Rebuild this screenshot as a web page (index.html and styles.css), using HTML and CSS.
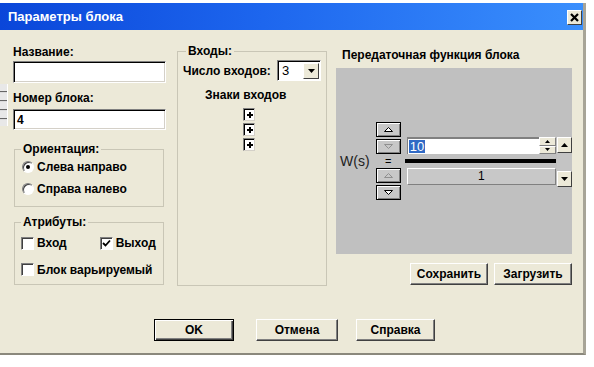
FILE: index.html
```html
<!DOCTYPE html>
<html lang="ru">
<head>
    <meta charset="UTF-8">
    <title>Параметры блока</title>
    <link rel="stylesheet" href="styles.css">
</head>
<body>
    <div class="edge-stub"></div>
    <div class="window">
        <div class="titlebar">
            <span class="title">Параметры блока</span>
            <span class="close">
                <svg width="9" height="9" viewBox="0 0 9 9"><path d="M1 1L8 8M8 1L1 8" stroke="#000" stroke-width="2.2"/></svg>
            </span>
        </div>

        <div class="client">
            <div class="top">
                <!-- left column -->
                <div class="col-left">
                    <div class="label first">Название:</div>
                    <div class="field name"></div>
                    <div class="label second">Номер блока:</div>
                    <div class="field number">4</div>

                    <fieldset class="group orient">
                        <legend>Ориентация:</legend>
                        <div class="opt"><span class="radio on"></span>Слева направо</div>
                        <div class="opt"><span class="radio"></span>Справа налево</div>
                    </fieldset>

                    <fieldset class="group attrs">
                        <legend>Атрибуты:</legend>
                        <div class="opt row1">
                            <span class="chk"></span>Вход
                            <span class="chk checked out">
                                <svg width="9" height="9" viewBox="0 0 9 9"><path d="M1 4L3.5 6.5L8 1.5" fill="none" stroke="#000" stroke-width="1.8"/></svg>
                            </span>Выход
                        </div>
                        <div class="opt row2"><span class="chk"></span>Блок варьируемый</div>
                    </fieldset>
                </div>

                <!-- middle column -->
                <fieldset class="group inputs">
                    <legend>Входы:</legend>
                    <div class="count-row">
                        <span>Число входов:</span>
                        <span class="combo">
                            <span class="combo-val">3</span>
                            <span class="combo-btn">
                                <svg width="7" height="4" viewBox="0 0 7 4"><path d="M0 0H7L3.5 4Z" fill="#000"/></svg>
                            </span>
                        </span>
                    </div>
                    <div class="signs-title">Знаки входов</div>
                    <div class="signs">
                        <span class="sign"><svg width="6" height="6" viewBox="0 0 6 6"><path d="M3 0V6M0 3H6" stroke="#000" stroke-width="2"/></svg></span>
                        <span class="sign"><svg width="6" height="6" viewBox="0 0 6 6"><path d="M3 0V6M0 3H6" stroke="#000" stroke-width="2"/></svg></span>
                        <span class="sign"><svg width="6" height="6" viewBox="0 0 6 6"><path d="M3 0V6M0 3H6" stroke="#000" stroke-width="2"/></svg></span>
                    </div>
                </fieldset>

                <!-- right column -->
                <div class="col-right">
                    <div class="label tf-title">Передаточная функция блока</div>
                    <div class="tf-area">
                        <span class="ws">W(s)</span>
                        <div class="spins">
                            <span class="sbtn"><svg width="9" height="5" viewBox="0 0 9 5"><path d="M4.5 0.5L8.5 4.5H0.5Z" fill="#fff" stroke="#000"/></svg></span>
                            <span class="sbtn gap"><svg width="9" height="5" viewBox="0 0 9 5"><path d="M0.5 0.5H8.5L4.5 4.5Z" fill="none" stroke="#909090"/></svg></span>
                            <span class="eq">=</span>
                            <span class="sbtn"><svg width="9" height="5" viewBox="0 0 9 5"><path d="M4.5 0.5L8.5 4.5H0.5Z" fill="none" stroke="#909090"/></svg></span>
                            <span class="sbtn gap"><svg width="9" height="5" viewBox="0 0 9 5"><path d="M0.5 0.5H8.5L4.5 4.5Z" fill="#fff" stroke="#000"/></svg></span>
                        </div>
                        <div class="fraction">
                            <div class="num">
                                <span class="num-input"><span class="sel">10</span></span>
                                <span class="num-spin">
                                    <span class="tiny"><svg width="5" height="3" viewBox="0 0 5 3"><path d="M2.5 0L5 3H0Z" fill="#000"/></svg></span>
                                    <span class="tiny"><svg width="5" height="3" viewBox="0 0 5 3"><path d="M0 0H5L2.5 3Z" fill="#000"/></svg></span>
                                </span>
                            </div>
                            <div class="bar"></div>
                            <div class="den">1</div>
                        </div>
                        <div class="scroll">
                            <span class="arrow"><svg width="7" height="4" viewBox="0 0 7 4"><path d="M3.5 0L7 4H0Z" fill="#000"/></svg></span>
                            <span class="thumb"></span>
                            <span class="arrow"><svg width="7" height="4" viewBox="0 0 7 4"><path d="M0 0H7L3.5 4Z" fill="#000"/></svg></span>
                        </div>
                    </div>
                    <div class="tf-buttons">
                        <span class="btn">Сохранить</span>
                        <span class="btn">Загрузить</span>
                    </div>
                </div>
            </div>

            <div class="bottom">
                <span class="btn ok">OK</span>
                <span class="btn cancel">Отмена</span>
                <span class="btn help">Справка</span>
            </div>
        </div>
    </div>
</body>
</html>
```

FILE: styles.css
```css
body {
    margin: 0;
    padding-top: 3px;
    background: #fff;
    font-family: "Liberation Sans", Arial, sans-serif;
    font-size: 12px;
    font-weight: bold;
    line-height: 14px;
    color: #000;
}
.edge-stub {
    position: absolute;
    left: 0;
    top: 84px;
    width: 7px;
    height: 42px;
    background: repeating-linear-gradient(#e8e8e8 0 7px, #666 7px 8px, #dcdcdc 8px 9px);
    border-right: 1px solid #fff;
    z-index: 2;
}
.window {
    width: 583px;
    border-right: 3px solid #a7a497;
    border-bottom: 2px solid #8a887c;
}
.titlebar {
    height: 27px;
    display: flex;
    align-items: center;
    justify-content: space-between;
    padding: 0 1px 0 8px;
    background: linear-gradient(to right, #0a46d9, #1d66ee 45%, #3a8ffd);
}
.title {
    color: #fff;
    font-size: 13px;
    margin-top: 1px;
}
.close {
    width: 15px;
    height: 15px;
    box-sizing: border-box;
    display: flex;
    align-items: center;
    justify-content: center;
    background: #ece9d8;
    border: 1px solid;
    border-color: #fff #404040 #404040 #fff;
    margin-top: 1px;
}
.client {
    height: 323px;
    box-sizing: border-box;
    background: #ece9d8;
    padding: 14px 0 0 13px;
}
.top {
    display: flex;
    align-items: flex-start;
}

/* left column */
.col-left {
    width: 153px;
}
.label.first { margin-top: 1px; }
.label.second { margin-top: 8px; }
.field {
    box-sizing: border-box;
    background: #fff;
    border: 1px solid;
    border-color: #808080 #fff #fff #808080;
    box-shadow: inset 1px 1px 0 #000, inset -1px -1px 0 #d4d0c8;
    padding: 3px 3px 0;
}
.field.name { margin-top: 2px; height: 22px; }
.field.number { margin-top: 4px; height: 21px; }

.group {
    margin: 0;
    border: 1px solid #c9c6b6;
    padding: 0 5px 6px 6px;
}
.group legend {
    padding: 0 2px;
    line-height: 14px;
}
.orient {
    margin: 12px 0 0 1px;
    width: 150px;
    box-sizing: border-box;
}
.attrs {
    margin: 8px 0 0 1px;
    width: 150px;
    box-sizing: border-box;
    padding-bottom: 1px;
}
.opt {
    display: flex;
    align-items: center;
    height: 22px;
}
.attrs .row1 { height: 26px; margin-top: 1px; }
.attrs .row2 { height: 27px; }
.radio {
    width: 12px;
    height: 12px;
    box-sizing: border-box;
    border-radius: 50%;
    background: #fff;
    border: 1px solid;
    border-color: #808080 #fff #fff #808080;
    box-shadow: inset 1px 1px 0 #404040;
    margin: 0 3px 0 1px;
    display: flex;
    align-items: center;
    justify-content: center;
}
.radio.on::after {
    content: "";
    width: 4px;
    height: 4px;
    border-radius: 50%;
    background: #000;
}
.chk {
    width: 13px;
    height: 13px;
    box-sizing: border-box;
    background: #fff;
    border: 1px solid;
    border-color: #808080 #fff #fff #808080;
    box-shadow: inset 1px 1px 0 #404040;
    margin-right: 3px;
    display: flex;
    align-items: center;
    justify-content: center;
}
.chk.out { margin-left: 33px; }

/* middle column */
.inputs {
    margin-left: 11px;
    width: 150px;
    height: 242px;
    box-sizing: border-box;
    padding: 0 5px 0 5px;
}
.inputs legend { margin-left: 3px; }
.count-row {
    display: flex;
    align-items: center;
    justify-content: space-between;
    margin-top: 2px;
}
.combo {
    width: 44px;
    height: 21px;
    box-sizing: border-box;
    display: flex;
    background: #fff;
    border: 1px solid;
    border-color: #808080 #fff #fff #808080;
    box-shadow: inset 1px 1px 0 #000;
    padding: 2px 1px 1px 2px;
}
.combo-val {
    flex: 1;
    font-weight: normal;
    font-size: 13px;
    padding-left: 2px;
    line-height: 16px;
}
.combo-btn {
    width: 16px;
    box-sizing: border-box;
    background: #ece9d8;
    border: 1px solid;
    border-color: #fff #404040 #404040 #fff;
    display: flex;
    align-items: center;
    justify-content: center;
}
.signs-title {
    margin: 7px 0 0 22px;
}
.signs {
    display: flex;
    flex-direction: column;
    margin: 6px 0 0 60px;
    gap: 2px;
}
.sign {
    width: 12px;
    height: 13px;
    box-sizing: border-box;
    background: #fff;
    border: 1px solid;
    border-color: #808080 #d4d0c8 #d4d0c8 #808080;
    box-shadow: inset 1px 1px 0 #000;
    display: flex;
    align-items: center;
    justify-content: center;
    padding: 1px 0 0 1px;
}

/* right column */
.col-right {
    margin-left: 9px;
    width: 236px;
}
.tf-title {
    margin-top: 4px;
    padding-left: 6px;
}
.tf-area {
    margin-top: 6px;
    height: 186px;
    background: #c0c0c0;
    display: flex;
    align-items: center;
    padding-left: 4px;
}
.ws {
    font-weight: normal;
    font-size: 14px;
    width: 30px;
    color: #222;
}
.spins {
    margin-left: 6px;
    width: 25px;
    display: flex;
    flex-direction: column;
}
.sbtn {
    height: 15px;
    box-sizing: border-box;
    background: #c8c8c8;
    border: 1px solid #000;
    box-shadow: inset 1px 1px 0 #fff, inset -1px -1px 0 #808080;
    display: flex;
    align-items: center;
    justify-content: center;
}
.sbtn.gap { margin-top: 2px; }
.eq {
    height: 14px;
    font-weight: normal;
    text-align: center;
    font-size: 11px;
    line-height: 14px;
}
.fraction {
    margin-left: 6px;
    width: 150px;
}
.num {
    display: flex;
    height: 17px;
}
.num-input {
    flex: 1;
    background: #fff;
    border-top: 2px solid #808080;
    border-left: 1px solid #808080;
    padding: 1px 0 0 1px;
}
.sel {
    background: #316ac5;
    color: #fff;
    font-weight: normal;
    font-size: 13px;
    line-height: 13px;
    padding: 0 1px;
    display: inline-block;
}
.num-spin {
    width: 17px;
    display: flex;
    flex-direction: column;
    background: #fff;
}
.tiny {
    flex: 1;
    background: #ece9d8;
    border: 1px solid;
    border-color: #fff #808080 #808080 #fff;
    display: flex;
    align-items: center;
    justify-content: center;
}
.bar {
    height: 4px;
    background: #000;
    margin: 5px 0 5px -2px;
}
.den {
    height: 17px;
    box-sizing: border-box;
    background: #c8c8c8;
    border: 1px solid;
    border-color: #fff #808080 #808080 #fff;
    text-align: center;
    font-weight: normal;
    font-size: 12px;
    line-height: 15px;
}
.scroll {
    width: 15px;
    height: 50px;
    margin-left: 1px;
    margin-top: 1px;
    display: flex;
    flex-direction: column;
    background: #c4c4c4;
}
.arrow {
    height: 16px;
    box-sizing: border-box;
    background: #ece9d8;
    border: 1px solid;
    border-color: #fff #404040 #404040 #fff;
    display: flex;
    align-items: center;
    justify-content: center;
}
.thumb { flex: 1; }
.tf-buttons {
    margin-top: 9px;
    display: flex;
    justify-content: flex-end;
    gap: 6px;
}
.btn {
    height: 22px;
    box-sizing: border-box;
    background: #ece9d8;
    border: 1px solid;
    border-color: #fff #404040 #404040 #fff;
    box-shadow: inset -1px -1px 0 #808080;
    display: flex;
    align-items: center;
    justify-content: center;
    width: 78px;
}
.bottom {
    display: flex;
    margin-top: 33px;
}
.btn.ok {
    margin-left: 141px;
    width: 80px;
    border: 1px solid #000;
    box-shadow: inset 1px 1px 0 #fff, inset -1px -1px 0 #404040, inset -2px -2px 0 #808080;
}
.btn.cancel { margin-left: 22px; width: 82px; }
.btn.help { margin-left: 18px; width: 79px; }
```
